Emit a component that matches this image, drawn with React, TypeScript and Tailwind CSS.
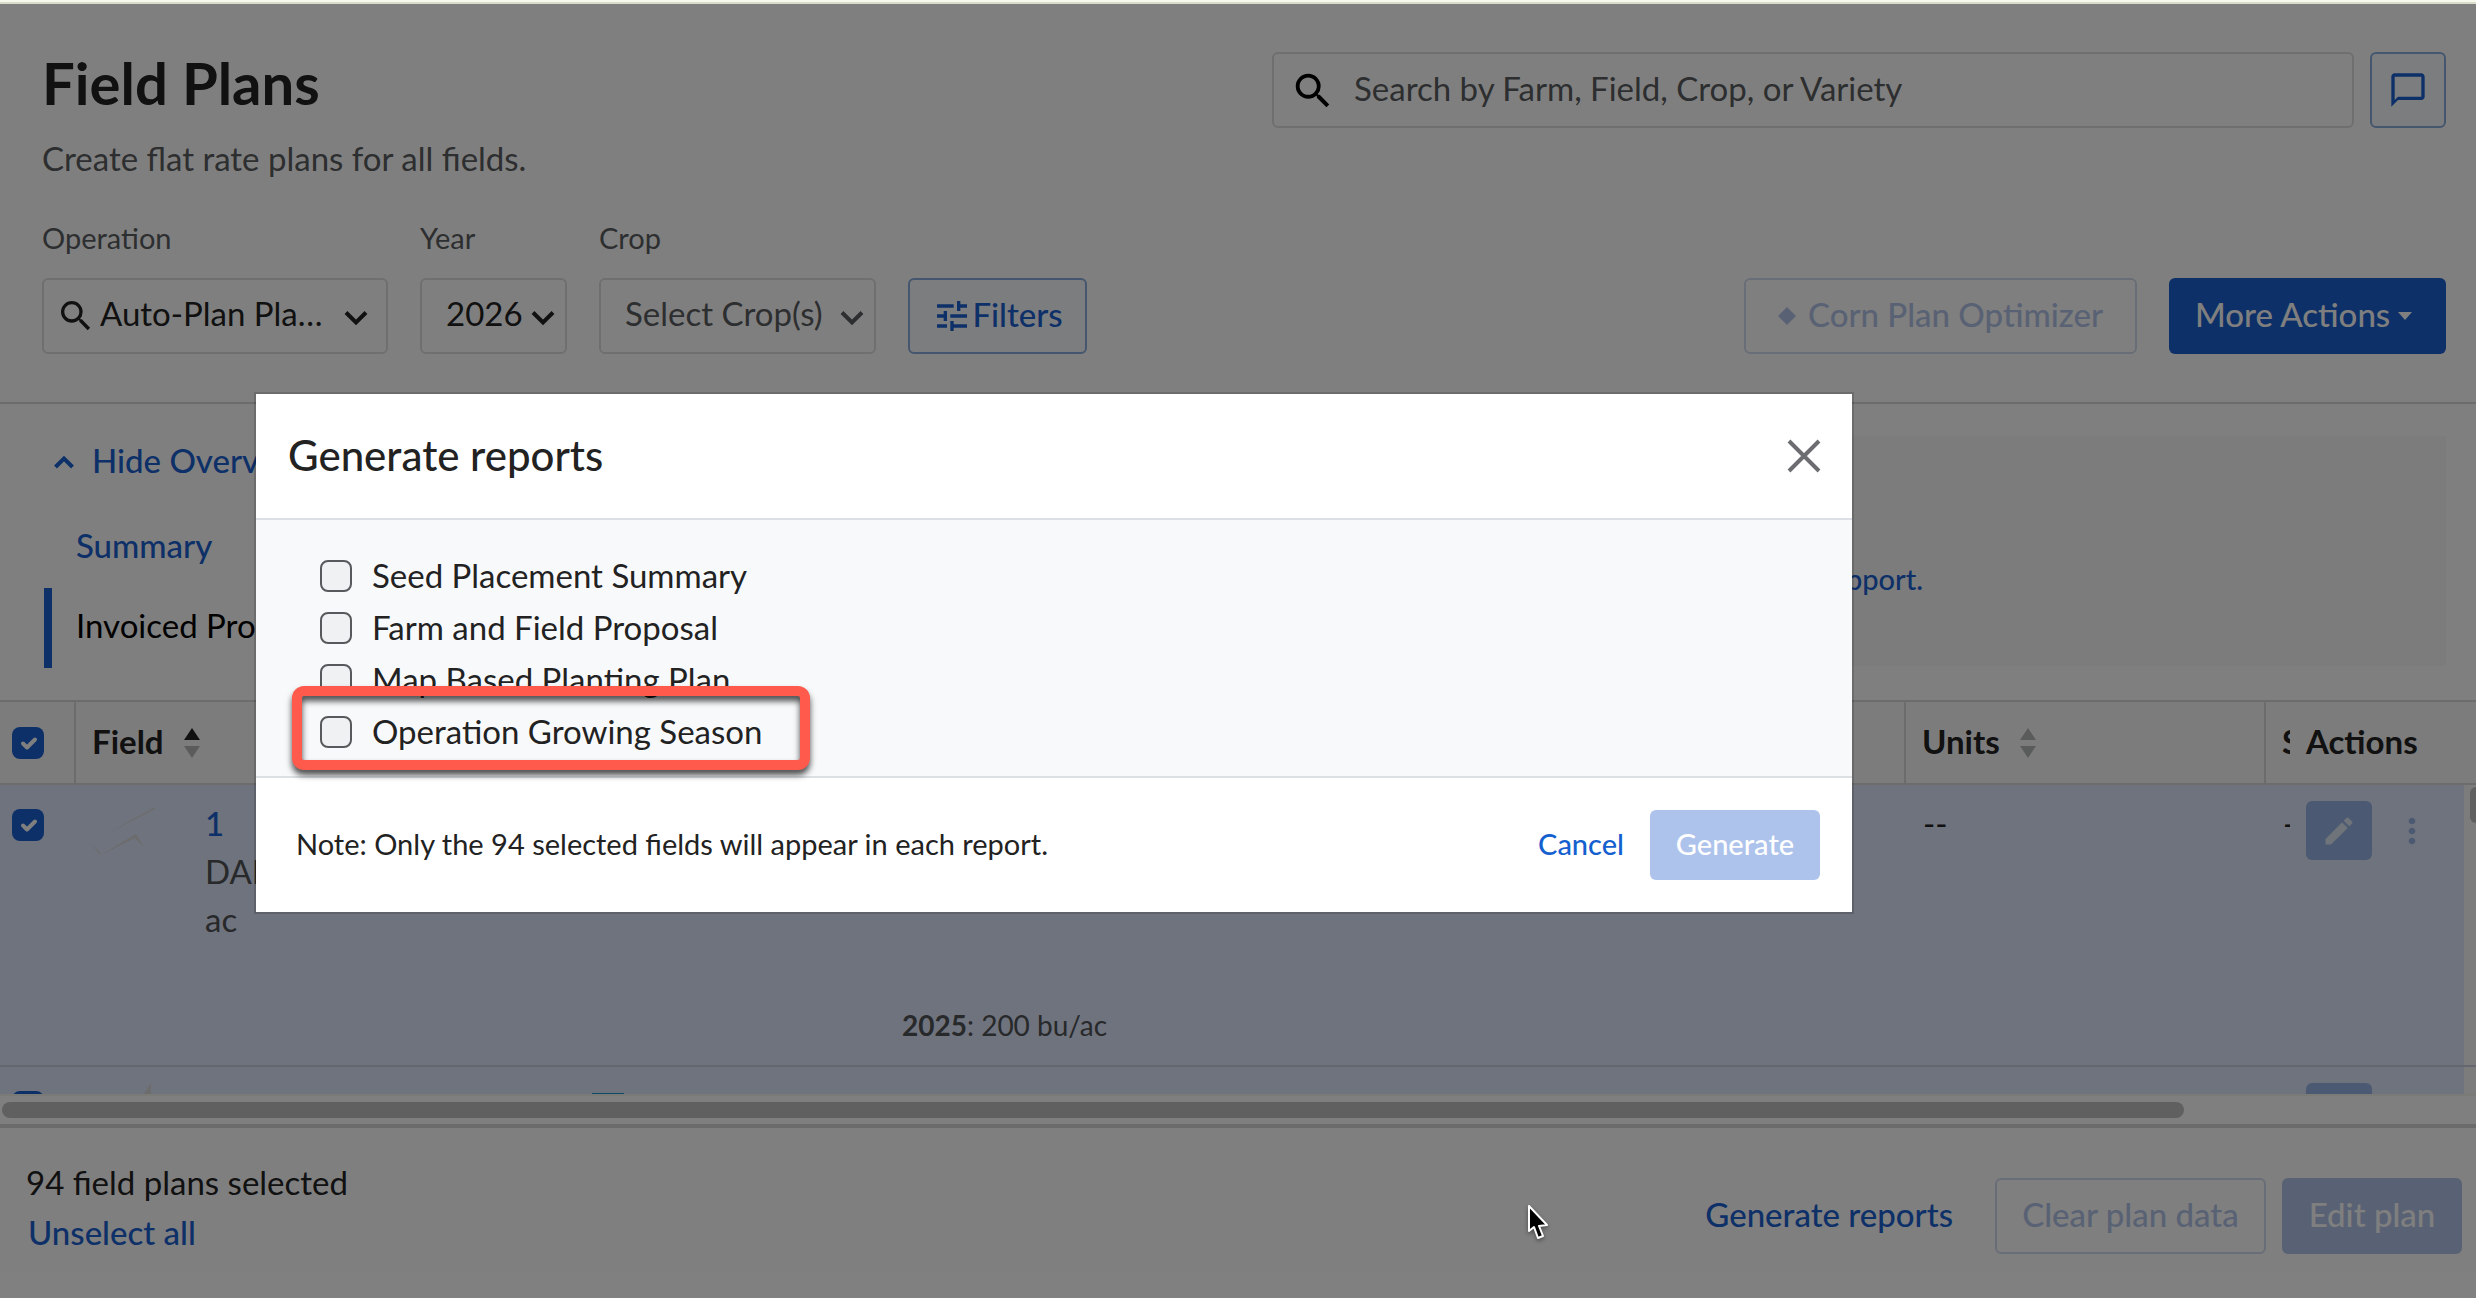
import React from 'react';
import { MdSearch, MdTune, MdEdit, MdMoreVert, MdChatBubbleOutline } from 'react-icons/md';

const reports = [
  { id: 'seed-placement', label: 'Seed Placement Summary' },
  { id: 'farm-field', label: 'Farm and Field Proposal' },
  { id: 'map-planting', label: 'Map Based Planting Plan' },
  { id: 'growing-season', label: 'Operation Growing Season', highlighted: true },
];

function Chevron({ className = '' }: { className?: string }) {
  return (
    <svg viewBox="0 0 24 16" className={`w-6 h-4 pointer-events-none ${className}`} fill="none" stroke="currentColor" strokeWidth="4">
      <path d="M2 2.5 L12 12.5 L22 2.5" />
    </svg>
  );
}

function SortIcon({ ascending = false }: { ascending?: boolean }) {
  return (
    <svg viewBox="0 0 16 30" className="w-4 h-[30px]">
      <path d="M8 0 L16 12 L0 12 Z" fill={ascending ? '#222' : '#b4b8b6'} />
      <path d="M8 30 L16 18 L0 18 Z" fill="#b4b8b6" />
    </svg>
  );
}

function RowCheckbox({ label }: { label: string }) {
  return (
    <span className="relative block w-8 h-8">
      <input
        type="checkbox"
        defaultChecked
        aria-label={label}
        className="block appearance-none w-8 h-8 rounded-lg bg-[#1a60d0]"
      />
      <svg viewBox="0 0 32 32" className="absolute inset-0 w-8 h-8 pointer-events-none" fill="none" stroke="white" strokeWidth="4" strokeLinecap="round" strokeLinejoin="round">
        <path d="M11 16.5 L15 20.5 L23 12.5" />
      </svg>
    </span>
  );
}

function Header() {
  return (
    <header className="pl-[42px] pr-[30px] pb-12 border-b-2 border-[#d8d8d8]">
      <div className="flex items-start justify-between pt-11">
        <div>
          <h1 className="text-[58px] leading-[70px] font-bold">Field Plans</h1>
          <p className="mt-4 text-[33px] leading-[48px] text-[#5a5c5e]">Create flat rate plans for all fields.</p>
        </div>
        <div className="flex gap-4 pt-1">
          <div className="relative">
            <MdSearch className="absolute left-[18px] top-4 w-[46px] h-[46px] text-black" />
            <input
              type="text"
              aria-label="Search plans"
              placeholder="Search by Farm, Field, Crop, or Variety"
              className="w-[1082px] h-[76px] pl-[80px] pb-1 border-2 border-[#dedede] rounded-md text-[33px] placeholder:text-[#5a5c5e]"
            />
          </div>
          <button aria-label="Comments" className="w-[76px] h-[76px] flex items-center justify-center rounded-md border-2 border-[#8cacde] bg-[#f8fafe] text-[#1a60d0]">
            <MdChatBubbleOutline className="w-10 h-10" />
          </button>
        </div>
      </div>

      <div className="flex items-end justify-between mt-8">
        <div className="flex items-end gap-8">
          <div className="w-[346px]">
            <label htmlFor="operation" className="block mb-4 text-[29px] leading-[48px] text-[#5a5c5e]">Operation</label>
            <div className="relative">
              <MdSearch className="absolute left-[14px] top-[18px] w-10 h-10" />
              <select id="operation" className="block w-full h-[76px] appearance-none pl-[56px] pb-1 border-2 border-[#dedede] rounded-md text-[33px]">
                <option>Auto-Plan Pla…</option>
              </select>
              <Chevron className="absolute right-5 top-8" />
            </div>
          </div>
          <div className="w-[147px]">
            <label htmlFor="year" className="block mb-4 text-[29px] leading-[48px] text-[#5a5c5e]">Year</label>
            <div className="relative">
              <select id="year" className="block w-full h-[76px] appearance-none pl-6 pb-1 border-2 border-[#dedede] rounded-md text-[33px]">
                <option>2026</option>
              </select>
              <Chevron className="absolute right-3 top-8" />
            </div>
          </div>
          <div className="w-[277px]">
            <label htmlFor="crop" className="block mb-4 text-[29px] leading-[48px] text-[#5a5c5e]">Crop</label>
            <div className="relative text-[#5a5c5e]">
              <select id="crop" className="block w-full h-[76px] appearance-none pl-6 pb-1 border-2 border-[#dedede] rounded-md text-[33px]">
                <option>Select Crop(s)</option>
              </select>
              <Chevron className="absolute right-3 top-8" />
            </div>
          </div>
          <button className="h-[76px] w-[179px] flex items-center justify-center rounded-md border-2 border-[#8cacde] bg-[#f8fafe] text-[33px] font-medium text-[#1a60d0]">
            <MdTune className="w-10 h-10" />
            <span className="pb-0.5">Filters</span>
          </button>
        </div>
        <div className="flex gap-8">
          <button disabled className="h-[76px] w-[393px] flex items-center justify-center gap-3 rounded-md border-2 border-[#d3dbee] text-[33px] font-medium text-[#b2c4e8]">
            <svg viewBox="0 0 18 18" className="w-[18px] h-[18px]" fill="currentColor">
              <path d="M9 0 L18 9 L9 18 L0 9 Z" />
            </svg>
            <span className="pb-0.5">Corn Plan Optimizer</span>
          </button>
          <button className="h-[76px] w-[277px] flex items-center gap-2 px-[26px] rounded-md bg-[#1a60d0] text-[33px] font-medium text-white">
            <span className="pb-0.5">More Actions</span>
            <svg viewBox="0 0 14 8" className="w-3.5 h-2" fill="currentColor">
              <path d="M0 0 H14 L7 8 Z" />
            </svg>
          </button>
        </div>
      </div>
    </header>
  );
}

function Overview() {
  return (
    <section className="flex items-start justify-between pl-11 pr-[30px] pt-8 pb-8">
      <div>
        <button className="flex items-center gap-[18px] pl-2.5 h-[52px] text-[33px] font-medium text-[#1a60d0]">
          <svg viewBox="0 0 20 14" className="w-5 h-3.5" fill="none" stroke="currentColor" strokeWidth="4">
            <path d="M1.5 12 L10 3.5 L18.5 12" />
          </svg>
          <span className="pb-0.5">Hide Overview</span>
        </button>
        <nav className="mt-5 flex flex-col">
          <a href="#summary" className="h-20 flex items-center border-l-8 border-transparent pl-6 pb-1 text-[33px] font-medium text-[#1a60d0]">Summary</a>
          <a href="#invoiced" className="h-20 flex items-center border-l-8 border-[#1a60d0] pl-6 pb-1 text-[33px] text-black">Invoiced Products</a>
        </nav>
      </div>
      <div className="w-[1900px] h-[230px] bg-[#f8f8f8] flex items-center justify-end pr-[523px] pt-14">
        <a href="#support" className="text-[29px] font-medium text-[#1a60d0]">Contact support.</a>
      </div>
    </section>
  );
}

function ActionButtons() {
  return (
    <div className="flex items-center gap-5">
      <button aria-label="Edit field plan" className="w-[66px] h-[59px] flex items-center justify-center rounded-md bg-[#96b4e4] text-[#dee6f4]">
        <MdEdit className="w-9 h-9" />
      </button>
      <button aria-label="More" className="text-[#96b4e4]">
        <MdMoreVert className="w-10 h-10" />
      </button>
    </div>
  );
}

const stickyCell = 'relative shadow-[-4px_0_14px_rgba(0,0,0,0.35)]';

function FieldTable() {
  return (
    <div className="flex-1 min-h-0 flex flex-col">
      <div className="flex-1 min-h-0 overflow-hidden border-t-2 border-[#d8d8d8]">
        <table className="w-full table-fixed border-collapse">
          <colgroup>
            <col className="w-[75px]" />
            <col className="w-[499px]" />
            <col className="w-[310px]" />
            <col className="w-[380px]" />
            <col />
            <col className="w-[360px]" />
            <col className="w-[25px]" />
            <col className="w-[174px]" />
            <col className="w-[12px]" />
          </colgroup>
          <thead>
            <tr className="h-[82px] border-b-2 border-[#d8d8d8] bg-[#f9f9f9] text-[33px] font-bold text-left">
              <th className="pl-3 border-r-2 border-[#d8d8d8]"><RowCheckbox label="Select all fields" /></th>
              <th className="pl-4">
                <span className="flex items-center gap-5"><span className="pb-0.5">Field</span> <SortIcon ascending /></span>
              </th>
              <th />
              <th />
              <th />
              <th className="pl-4 border-x-2 border-[#d8d8d8]">
                <span className="flex items-center gap-5"><span className="pb-0.5">Units</span> <SortIcon /></span>
              </th>
              <th className="pl-4 pb-0.5 overflow-hidden">S</th>
              <th colSpan={2} className={`${stickyCell} bg-[#f9f9f9] pl-4 pb-0.5`}>Actions</th>
            </tr>
          </thead>
          <tbody>
            <tr className="h-[282px] border-b-2 border-[#c8cedb] bg-[#dee6fa] align-top text-[33px] leading-[48px]">
              <td className="pl-3 pt-6"><RowCheckbox label="Select field 1" /></td>
              <td className="pt-3.5">
                <div className="flex">
                  <svg viewBox="0 0 130 56" className="w-[130px] h-14 shrink-0" fill="#d8d8d8">
                    <path d="M30 36 L80 8 L80 10 L32 35 Z" />
                    <path d="M26 56 L61 35 L69 48 L60 39 Z" />
                    <path d="M16 44 L26 55 L24 55 Z" />
                  </svg>
                  <div className="text-[#505256]">
                    <a href="#field-1" className="block text-[#1a60d0] font-medium">1</a>
                    DAD<br />ac
                  </div>
                </div>
              </td>
              <td />
              <td className="align-bottom pl-[18px] pb-4 text-[28px] text-[#505256]"><b>2025</b>: 200 bu/ac</td>
              <td />
              <td className="pl-[18px] pt-3.5">--</td>
              <td className="pl-[18px] pt-3.5 overflow-hidden whitespace-nowrap">--</td>
              <td className={`${stickyCell} bg-[#dee6fa] pl-4 pt-4`}><ActionButtons /></td>
              <td className="relative bg-[#f8f8f8]">
                <span className="block mt-0.5 ml-1.5 w-1.5 h-9 rounded-l-full bg-[#c0c0c0]" />
              </td>
            </tr>
            <tr className="h-[282px] bg-[#dee6fa] align-top text-[33px] leading-[48px]">
              <td className="pl-3 pt-6"><RowCheckbox label="Select field 2" /></td>
              <td className="pt-4">
                <svg viewBox="0 0 80 40" className="w-20 h-10" fill="#d8d8d8">
                  <path d="M76 0 L76 40 L50 40 Z" />
                </svg>
              </td>
              <td className="pl-[18px] pt-[26px]"><span className="block w-8 h-8 bg-[#1796c8]" /></td>
              <td />
              <td />
              <td />
              <td />
              <td className={`${stickyCell} bg-[#dee6fa] pl-4 pt-4`}><ActionButtons /></td>
              <td className="bg-[#f8f8f8]" />
            </tr>
          </tbody>
        </table>
      </div>
      <div className="h-[30px] shrink-0 border-t-2 border-[#f4f4ec] pt-1.5 pl-0.5">
        <div className="w-[2182px] h-4 rounded-full bg-[#c0c0c0]" />
      </div>
    </div>
  );
}

function SelectionBar() {
  return (
    <footer className="shrink-0 h-[174px] border-t-4 border-[#d6d6d6] flex items-center justify-between pl-[26px] pr-[14px]">
      <div className="flex flex-col items-start pb-3 text-[33px] leading-[50px]">
        <span>94 field plans selected</span>
        <button className="pl-0.5 font-medium text-[#1a60d0]">Unselect all</button>
      </div>
      <div className="flex items-center gap-4 text-[33px] font-medium pt-1.5">
        <button className="mr-[26px] pb-0.5 text-[#1a60d0]">Generate reports</button>
        <button disabled className="h-[76px] w-[271px] pb-0.5 rounded-md border-2 border-[#d3dbee] text-[#b2c4e8]">Clear plan data</button>
        <button disabled className="h-[76px] w-[180px] pb-0.5 rounded-md bg-[#b2c4e8] text-white">Edit plan</button>
      </div>
    </footer>
  );
}

function GenerateReportsDialog() {
  return (
    <div role="dialog" aria-labelledby="dialog-title" className="absolute left-64 right-[624px] top-[390px] bg-white outline-2 outline-black/15">
      <div className="h-[126px] flex items-center justify-between pl-8 pr-7 border-b-2 border-[#dcdfe6]">
        <h2 id="dialog-title" className="pb-0.5 text-[42px] leading-[48px] font-medium">Generate reports</h2>
        <button aria-label="Close" className="text-[#6b6d70]">
          <svg viewBox="0 0 40 40" className="w-10 h-10" fill="none" stroke="currentColor" strokeWidth="4">
            <path d="M5 5 L35 35 M35 5 L5 35" />
          </svg>
        </button>
      </div>
      <div className="bg-[#f8f9fb] pl-16 pt-[30px] pb-[18px] border-b-2 border-[#dde0e3]">
        {reports.map((report) => (
          <div key={report.id} className="relative h-[52px] flex items-center">
            <input
              type="checkbox"
              id={report.id}
              className="appearance-none w-8 h-8 rounded-lg border-2 border-[#58595c] bg-[#f0f1f3]"
            />
            <label htmlFor={report.id} className="pl-5 pb-0.5 text-[33px] leading-[48px]">{report.label}</label>
            {report.highlighted && (
              <span className="absolute -left-7 -top-5 w-[518px] h-[84px] border-10 border-[#ff5a4c] rounded-xl drop-shadow-[0_5px_3px_rgba(0,0,0,0.7)]" />
            )}
          </div>
        ))}
      </div>
      <div className="h-[134px] flex items-center justify-between pl-10 pr-8 text-[29px]">
        <p className="pb-0.5">Note: Only the 94 selected fields will appear in each report.</p>
        <div className="flex items-center font-medium">
          <button className="px-[26px] pb-0.5 text-[#1560cf]">Cancel</button>
          <button disabled className="w-[170px] h-[70px] pb-0.5 rounded-md bg-[#adc3ec] text-white">Generate</button>
        </div>
      </div>
    </div>
  );
}

function Pointer() {
  return (
    <svg viewBox="0 0 20 36" className="absolute left-[1528px] top-[1201px] w-5 h-9 drop-shadow-[0_2px_2px_rgba(0,0,0,0.4)]">
      <path d="M1 1 L1 26 L6 22 L10 33 L15 31 L11 21 L19 20 Z" fill="black" stroke="white" strokeWidth="2" strokeLinejoin="round" />
    </svg>
  );
}

export default function App() {
  return (
    <div className="h-screen flex flex-col overflow-hidden bg-white font-['Lato',sans-serif] text-[#222]">
      <div className="h-1 shrink-0 bg-[#f6f9ec] border-b-2 border-[#dadccb]" />
      <div className="relative flex-1 min-h-0 flex flex-col">
        <Header />
        <Overview />
        <FieldTable />
        <SelectionBar />
        <div className="absolute inset-0 bg-black/50" />
        <GenerateReportsDialog />
        <Pointer />
      </div>
    </div>
  );
}
